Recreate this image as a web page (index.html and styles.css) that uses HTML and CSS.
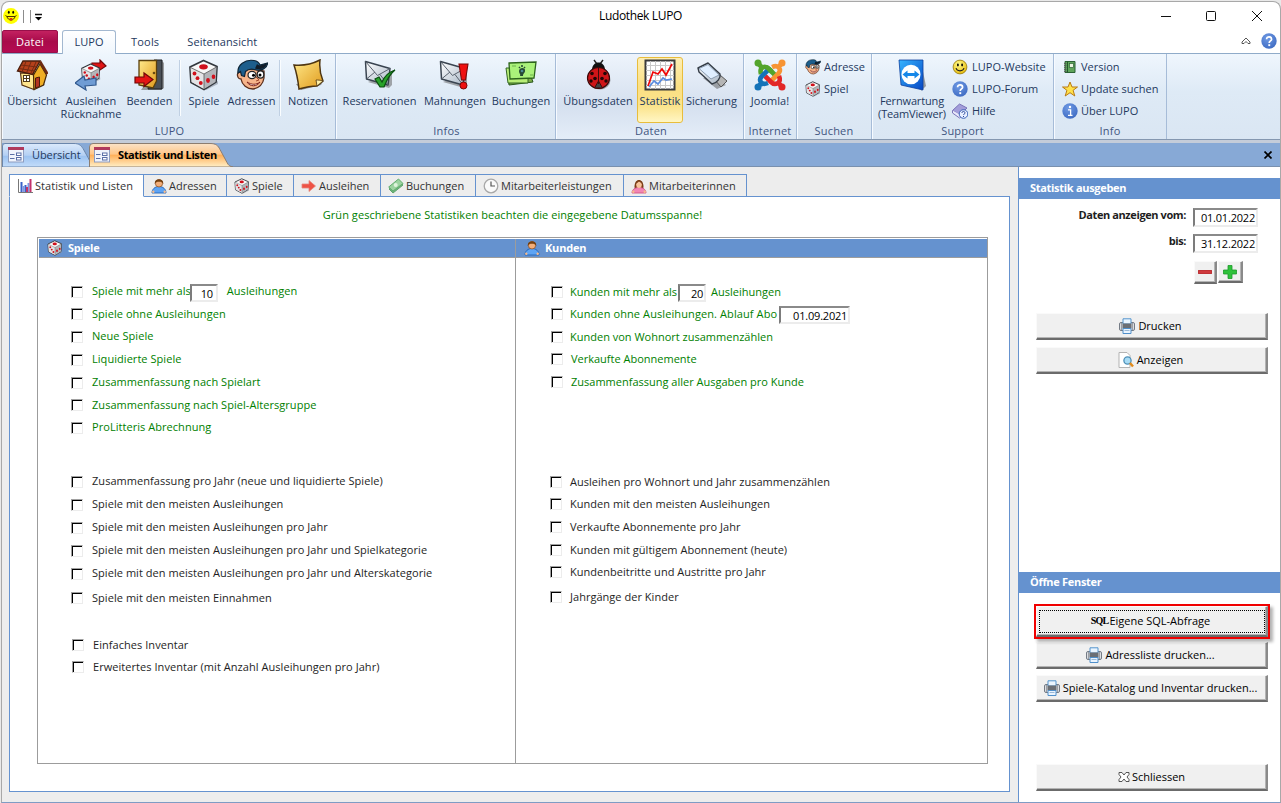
FILE: index.html
```html
<!DOCTYPE html>
<html lang="de">
<head>
<meta charset="utf-8">
<title>Ludothek LUPO</title>
<link rel="stylesheet" href="styles.css">
</head>
<body>
<svg class="defs" width="0" height="0" aria-hidden="true">
  <defs>
    <linearGradient id="gGold" x1="0" y1="0" x2="1" y2="1"><stop offset="0" stop-color="#ffe98a"/><stop offset="1" stop-color="#e09a1c"/></linearGradient>
    <linearGradient id="gSilver" x1="0" y1="0" x2="1" y2="1"><stop offset="0" stop-color="#ffffff"/><stop offset="1" stop-color="#a9b7c6"/></linearGradient>
    <linearGradient id="gBlue" x1="0" y1="0" x2="1" y2="1"><stop offset="0" stop-color="#36b4ff"/><stop offset="1" stop-color="#0647c4"/></linearGradient>
    <linearGradient id="gOrangeTab" x1="0" y1="0" x2="0" y2="1"><stop offset="0" stop-color="#fbe3c8"/><stop offset=".45" stop-color="#ffc688"/><stop offset=".5" stop-color="#ffb05a"/><stop offset="1" stop-color="#fff0c8"/></linearGradient>
    <linearGradient id="gBlueTab" x1="0" y1="0" x2="0" y2="1"><stop offset="0" stop-color="#dceafb"/><stop offset=".5" stop-color="#b4d0f4"/><stop offset=".55" stop-color="#9dc3f1"/><stop offset="1" stop-color="#c4ddfa"/></linearGradient>
    <radialGradient id="gRound" cx=".4" cy=".3" r=".8"><stop offset="0" stop-color="#6f9ae4"/><stop offset="1" stop-color="#3b68c0"/></radialGradient>
    <radialGradient id="gSmile" cx=".4" cy=".3" r=".8"><stop offset="0" stop-color="#fffb8a"/><stop offset="1" stop-color="#e3b400"/></radialGradient>
  </defs>
  <symbol id="dice" viewBox="0 0 32 32">
    <path d="M18 31l12-6v-3L18 29z" fill="#8a93a0" opacity=".6"/>
    <path d="M15.500 1.500L29 7.500 28 23 16 30.500 3 23.500 2 8z" fill="#f7f7f7" stroke="#33383e" stroke-width="1.800" stroke-linejoin="round"/>
    <path d="M2.500 8.500L16 15v15L3.500 23z" fill="#e4e4e6"/><path d="M16 15l12.500-7-1 15L16 30z" fill="#b3b5b9"/>
    <path d="M2.500 8.500L16 15l12.500-7M16 15v15" stroke="#555" stroke-width=".8" fill="none"/>
    <ellipse cx="15.500" cy="7.800" rx="4.300" ry="2.600" fill="#d0101c"/>
    <g fill="#d0101c"><circle cx="6.500" cy="14.500" r="1.900"/><circle cx="9.500" cy="19.200" r="1.900"/><circle cx="12.800" cy="24" r="1.900"/><ellipse cx="20" cy="21.500" rx="1.900" ry="2.400"/><ellipse cx="25.500" cy="17.800" rx="1.800" ry="2.300"/></g>
  </symbol>
  <symbol id="house" viewBox="0 0 32 32">
    <path d="M5 26l13 5 11-5-2-3z" fill="#777" opacity=".6"/>
    <path d="M4.500 14L6 26l12 4.500V15z" fill="#ffe58c" stroke="#5b3712" stroke-width="1.200"/>
    <path d="M17.500 16L24 5l6.500 11-3 10-9.500 4.500z" fill="#f0ae24" stroke="#4b2b08" stroke-width="1.200"/>
    <path d="M1.500 12L7 2h17l-7.500 13.500z" fill="#b5411b" stroke="#4a1e0c" stroke-width="1.400"/>
    <path d="M5 6l16 2M3 9.500l16 2.500M10 2.500L6 13M15 3l-4.500 11M20 3l-5 11" stroke="#742b12" stroke-width="1"/>
    <path d="M24 2.500L31.500 15" stroke="#6d2a11" stroke-width="2.600"/>
    <rect x="7.500" y="16.500" width="6" height="6" fill="#fff" stroke="#4f3a19"/><path d="M10.500 16.500v6M7.500 19.500h6" stroke="#4f3a19"/>
    <path d="M19.500 19l4-1v9.500l-4 1.500z" fill="#b33420" stroke="#4b1b0a"/>
  </symbol>
  <symbol id="face" viewBox="0 0 32 32">
    <path d="M4 13c-4 0-3 7 1 7 1 6 6 10 12 10 6-1 10-5 11-11V12L9 9z" fill="#f6b48a" stroke="#5a2d1a" stroke-width="1.300"/>
    <path d="M2 14C1 6 9 0 18 1.500c3 .5 5 2 6 4.500l7.500-2c0 5-6 8.500-13 6.500-4-1-7 0-9 2l-1 5-3-1-1-4z" fill="#1d5e8c" stroke="#0e2638" stroke-width="1.200"/>
    <path d="M21 5c1 1 3 1.500 3 1.500l7-2c-1 5-7 6.500-12 5z" fill="#111c28"/>
    <ellipse cx="16" cy="16" rx="4" ry="3.600" fill="#fff" stroke="#222" stroke-width="1.200"/><ellipse cx="24.500" cy="15.500" rx="3.300" ry="3.600" fill="#fff" stroke="#222" stroke-width="1.200"/>
    <circle cx="17.500" cy="16.300" r="1.500"/><circle cx="24" cy="16" r="1.500"/>
    <path d="M20 18l3 3-3 1" stroke="#a44b30" fill="none"/><path d="M11 23c5 3 9 3 13 0-3 5-10 5-13 0z" fill="#fff" stroke="#7c2018" stroke-width="1"/>
  </symbol>
  <symbol id="person" viewBox="0 0 16 16">
    <path d="M1 15C1 11 4 8.500 8 8.500s7 2.500 7 6.500z" fill="#5ea4f4" stroke="#2264b8" stroke-width=".9"/><circle cx="2.300" cy="13.800" r="1.200" fill="#f7b98a"/><circle cx="13.700" cy="13.800" r="1.200" fill="#f7b98a"/>
    <circle cx="8" cy="5.300" r="3.700" fill="#f3ae79" stroke="#8a4a1c" stroke-width=".7"/><path d="M3.900 6C2.500-.3 13.500-.3 12.100 6c-1-2-1.800-2.300-4.100-2.300S4.900 4 3.900 6z" fill="#75400f"/>
  </symbol>
  <symbol id="woman" viewBox="0 0 16 16">
    <path d="M3.700 10.500C2-1 14-1 12.300 10.500z" fill="#7b3e18"/>
    <path d="M1 15c0-3.500 3-5.500 7-5.500s7 2 7 5.500z" fill="#f286b4" stroke="#d05287" stroke-width=".9"/><circle cx="2.300" cy="13.800" r="1.200" fill="#f7b98a"/><circle cx="13.700" cy="13.800" r="1.200" fill="#f7b98a"/>
    <ellipse cx="8" cy="6.400" rx="2.800" ry="3.500" fill="#f8c49c"/><path d="M4.800 6c0-3 1.800-3.500 3.200-3.500S11.200 3 11.200 6C10 5 9 4 8 3.600 7 4.500 6 5.300 4.800 6z" fill="#7b3e18"/>
  </symbol>
  <symbol id="form" viewBox="0 0 16 16">
    <rect x=".5" y="1" width="15" height="14" fill="#f0f4fc" stroke="#8e9dc0"/><rect x="0" y="0" width="16" height="3" fill="#b03a5c"/>
    <path d="M2 7.500h4.500M2 11.500h4.500" stroke="#5b6fa6"/><rect x="8.500" y="6" width="4.500" height="2.500" fill="#fff" stroke="#5b6fa6"/><rect x="8.500" y="10.500" width="4.500" height="2.500" fill="#fff" stroke="#5b6fa6"/>
  </symbol>
  <symbol id="mail" viewBox="0 0 32 32">
    <path d="M4 23l21 6 3-3V12z" fill="#666" opacity=".55"/>
    <path d="M1.500 2.500L26 9.500 24 26 2.500 20z" fill="url(#gSilver)" stroke="#3a4450" stroke-width="1.500" stroke-linejoin="round"/>
    <path d="M1.500 2.500l12 14L26 9.500M2.500 20l8.500-7M24 26l-8-10.500" fill="none" stroke="#59626e" stroke-width="1"/>
  </symbol>
  <symbol id="printer" viewBox="0 0 16 16">
    <rect x=".5" y="4.500" width="15" height="8" rx="1.500" fill="#dcdee1" stroke="#747b85"/><path d="M4 6V.8h8V6z" fill="#eaf5ff" stroke="#5594cc"/>
    <path d="M2.500 5v7M13.500 5v7" stroke="#9a9fa7"/><rect x="3.500" y="5.500" width="9" height="5" fill="#6b6f75"/><path d="M4 10.500h8v5H4z" fill="#e9f4ff" stroke="#4f8fca"/><path d="M5.500 12.500h5" stroke="#9ab9d8"/>
  </symbol>
  <symbol id="help" viewBox="0 0 16 16"><circle cx="8" cy="8" r="7.700" fill="url(#gRound)"/><path d="M5.600 6.200c0-3.200 5-3 5 0 0 1.700-2.400 1.800-2.400 3.800" fill="none" stroke="#fff" stroke-width="1.700"/><rect x="7.300" y="11.200" width="1.900" height="1.900" fill="#fff"/></symbol>
  <symbol id="smile" viewBox="0 0 16 16"><circle cx="8" cy="8" r="6.900" fill="url(#gSmile)" stroke="#94780c" stroke-width=".8"/><ellipse cx="5.900" cy="6" rx=".9" ry="1.400"/><ellipse cx="10.100" cy="6" rx=".9" ry="1.400"/><path d="M4 9.200c1 3.500 7 3.500 8 0" fill="none" stroke="#222" stroke-width="1.100"/></symbol>
</svg>

<div class="window">
  <header class="titlebar">
    <svg class="appicon" width="16" height="16" viewBox="0 0 16 16"><circle cx="8" cy="8" r="7.900" fill="#ffff00"/><ellipse cx="5.800" cy="4.300" rx=".9" ry="1.500"/><ellipse cx="10.200" cy="4.300" rx=".9" ry="1.500"/><path d="M2.500 7.500l1.300.8c1.500 5 6.900 5 8.400 0l1.300-.8M4 8.500h8" stroke="#4c3000" fill="none" stroke-width="1"/><path d="M6.500 10h3L9 12.500H7z" fill="#e03010"/></svg>
    <svg class="quick" width="22" height="14" viewBox="0 0 22 14"><path d="M2.500 0v13M9.500 0v13" stroke="#8c8c8c"/><path d="M14 4.500h7" stroke="#111" stroke-width="1.500"/><path d="M14 7h7l-3.500 3.500z"/></svg>
    <h1>Ludothek LUPO</h1>
    <svg class="wincontrols" width="104" height="12" viewBox="0 0 104 12" fill="none" stroke="#111"><path d="M0 6.500h10"/><rect x="45.500" y="1.500" width="9" height="9" rx="1"/><path d="M91 1l10 10M101 1L91 11"/></svg>
  </header>

  <nav class="menu">
    <span class="file">Datei</span><span class="mtab on">LUPO</span><span class="mtab tools-tab">Tools</span><span class="mtab preview">Seitenansicht</span>
    <svg class="collapse" width="10" height="8" viewBox="0 0 10 8"><path d="M1 5l4-4 4 4v1.500H7L5 4.500l-2 2H1z" fill="#fff" stroke="#444" stroke-width=".9"/></svg>
    <svg width="16" height="16"><use href="#help"/></svg>
  </nav>

  <section class="ribbon">
    <div class="group g-lupo">
      <div class="tools">
        <div class="tool w56"><svg width="32" height="32"><use href="#house"/></svg><span>Übersicht</span></div>
        <div class="tool w62"><svg width="32" height="32" viewBox="0 0 32 32"><path d="M17 4h8V1l6 6-9 6-2-3h-4z" fill="#e01414" stroke="#730808" stroke-width="1.200"/><svg x="5" y="4" width="22" height="21" viewBox="0 0 32 32"><use href="#dice"/></svg><path d="M0 24l9-7 1 4 11-2v7l-11 1 1 4z" fill="#6f9cd4" stroke="#31598e" stroke-width="1.200"/></svg><span>Ausleihen<br>Rücknahme</span></div>
        <div class="tool w55"><svg width="32" height="32" viewBox="0 0 32 32"><path d="M28 2l2 2v25l-3 2H7" fill="#777" opacity=".7"/><path d="M20 1h8v29H14z" fill="#4a5057" stroke="#1c1f22"/><path d="M5 1.500h17.500V22L19 29 5 26z" fill="url(#gGold)" stroke="#5a3f0b" stroke-width="1.300"/><circle cx="20" cy="14" r="1.300" fill="#6a4a10"/><path d="M1 18h9v-4l9 6.500-9 7V24H1z" fill="#e41414" stroke="#6f0707" stroke-width="1.200"/></svg><span>Beenden</span></div>
        <i class="sep"></i>
        <div class="tool w42"><svg width="32" height="32"><use href="#dice"/></svg><span>Spiele</span></div>
        <div class="tool w53"><svg width="32" height="32"><use href="#face"/></svg><span>Adressen</span></div>
        <i class="sep"></i>
        <div class="tool w52"><svg width="32" height="32" viewBox="0 0 32 32"><path d="M4 25l5 6 20-5 2-4z" fill="#555" opacity=".6"/><path d="M2 6c9 1 18-1 26-5-1 9 0 14 3 21l-6 5c-7 0-11 1-18 3C6 21 5 15 2 6z" fill="url(#gGold)" stroke="#4e3510" stroke-width="1.500"/><path d="M31 22c-3-1-5-1-7-1l1 6z" fill="#fff0a8" stroke="#4e3510" stroke-width=".8"/></svg><span>Notizen</span></div>
      </div>
      <div class="caption">LUPO</div>
    </div>
    <div class="group g-infos">
      <div class="tools">
        <div class="tool w83"><svg width="32" height="32" viewBox="0 0 32 32"><use href="#mail" width="32" height="32"/><path d="M11 20l4-2 3 5c3-7 7-10 13-12-5 4-8 9-11 17h-4z" fill="#28a32a" stroke="#0b4f10" stroke-width="1.200"/></svg><span>Reservationen</span></div>
        <div class="tool w66"><svg width="32" height="32" viewBox="0 0 32 32"><use href="#mail" width="32" height="32"/><path d="M20 5h9l-2.500 16h-4z" fill="#ee1010" stroke="#7a0707" stroke-width="1.100"/><circle cx="24.500" cy="26.500" r="3.500" fill="#ee1010" stroke="#7a0707"/></svg><span>Mahnungen</span></div>
        <div class="tool w65"><svg width="32" height="32" viewBox="0 0 32 32"><path d="M3 12l21 0 4 11-24 3z" fill="#7fae4a" stroke="#27561a"/><path d="M1 9h22v15H3z" fill="#b8ee78" stroke="#316620"/><path d="M4 4l27-1-2 16-24 1z" fill="#aaf27a" stroke="#2c631c" stroke-width="1.300"/><path d="M7 7h4M25 16h3" stroke="#6cb04d"/><path d="M14 12c0-4 7-4 6 0 0 2-2 2-2 5h-3c1-2-1-2-1-5z" fill="#264b35"/><path d="M14 8l1 1M17 6v2M20 8l-1 1" stroke="#264b35" stroke-width="1.600"/><circle cx="17" cy="12" r="1.300" fill="#4d8b97"/></svg><span>Buchungen</span></div>
      </div>
      <div class="caption">Infos</div>
    </div>
    <div class="group g-daten">
      <div class="tools">
        <div class="tool w78"><svg width="32" height="32" viewBox="0 0 32 32"><ellipse cx="18" cy="21" rx="10.500" ry="9.500" fill="#555" opacity=".5"/><path d="M12 1l3 4M21 1l-3 4" stroke="#222" stroke-width="1.400"/><path d="M10 11c0-10 13-10 13 0z" fill="#111"/><ellipse cx="16.500" cy="19" rx="11" ry="10.500" fill="#cf1518" stroke="#3b0909" stroke-width="1.200"/><path d="M16.500 9v16M12.500 29l4-7 4 7z" fill="#444" stroke="#400b0b"/><g fill="#210606"><circle cx="10" cy="14.500" r="1.800"/><circle cx="13" cy="19.500" r="1.800"/><circle cx="9" cy="22" r="1.700"/><circle cx="23" cy="14.500" r="1.800"/><circle cx="20" cy="19.500" r="1.800"/><circle cx="24" cy="22" r="1.700"/></g></svg><span>Übungsdaten</span></div>
        <div class="tool w46 active"><svg width="32" height="32" viewBox="0 0 32 32"><rect x="1.500" y="1.500" width="29" height="29" fill="#fff" stroke="#3b3b3b" stroke-width="2"/><path d="M6.500 2v28M11.500 2v28M16.500 2v28M21.500 2v28M26.500 2v28M2 6.500h28M2 11.500h28M2 16.500h28M2 21.500h28M2 26.500h28" stroke="#c9c9c9"/><path d="M4 27l5-14 5 2 4-5 4 6 6-11" stroke="#f00808" fill="none" stroke-width="1.700"/><path d="M5 28l5-6 4 3 5-6 3 2 6-1" stroke="#5b8de0" fill="none" stroke-width="1.700"/></svg><span>Statistik</span></div>
        <div class="tool w57"><svg width="32" height="32" viewBox="0 0 32 32"><path d="M7 19l14 11 9-4-12-8z" fill="#555" opacity=".5"/><path d="M19 21l5-5 7 6-6 6z" fill="#b5b5b5" stroke="#555"/><path d="M2 9L12 4l12 11c1 4-3 9-8 10L3 13z" fill="url(#gSilver)" stroke="#353d47" stroke-width="1.400" stroke-linejoin="round"/><path d="M3 9.500L12 5.500l11 10.500-8 4z" fill="#dfeeff" stroke="#8193a8" stroke-width=".9"/></svg><span>Sicherung</span></div>
      </div>
      <div class="caption">Daten</div>
    </div>
    <div class="group g-internet">
      <div class="tools"><div class="tool w52"><svg width="34" height="32" viewBox="0 0 34 32" fill="none"><g stroke-width="4.600"><path d="M5 4l5 6M8 15C6 8 12 6 16 10l7 7" stroke="#53a52c"/><path d="M29 4l-5 6M19 8c7-3 10 3 6 7l-8 8" stroke="#f79433"/><path d="M29 28l-5-6M26 17c3 7-4 10-8 6l-6-6" stroke="#e22728"/><path d="M5 28l5-6M15 24c-7 3-10-3-6-7l8-8" stroke="#1473b8"/><path d="M12 8.500c1-.5 3 .5 4 1.500l3 3" stroke="#53a52c"/></g><circle cx="5" cy="4" r="3.500" fill="#53a52c"/><circle cx="29" cy="4" r="3.500" fill="#f79433"/><circle cx="29" cy="28" r="3.500" fill="#e22728"/><circle cx="5" cy="28" r="3.500" fill="#1473b8"/></svg><span>Joomla!</span></div></div>
      <div class="caption">Internet</div>
    </div>
    <div class="group g-suchen">
      <div class="links"><div><svg width="16" height="16"><use href="#face"/></svg><span>Adresse</span></div><div><svg width="16" height="16"><use href="#dice"/></svg><span>Spiel</span></div></div>
      <div class="caption">Suchen</div>
    </div>
    <div class="group g-support">
      <div class="tools">
        <div class="tool w82"><svg width="32" height="32" viewBox="0 0 32 32"><path d="M25 3l5 24-5 5z" fill="#555" opacity=".55"/><path d="M3 1h24v30L5 26z" fill="url(#gBlue)" stroke="#0c3fa0" stroke-width=".8"/><ellipse cx="15" cy="15.500" rx="9.500" ry="9.800" fill="#fff"/><path d="M6.500 15.500l5-4v2.500h7v-2.500l5 4-5 4V17h-7v2.500z" fill="#1687e8"/></svg><span class="tv">Fernwartung<br>(TeamViewer)</span></div>
        <div class="links">
          <div><svg width="16" height="16"><use href="#smile"/></svg><span>LUPO-Website</span></div>
          <div><svg width="16" height="16"><use href="#help"/></svg><span>LUPO-Forum</span></div>
          <div><svg width="16" height="16" viewBox="0 0 16 16"><path d="M.5 7.500l7-6.500 7.500 4-7 7z" fill="#a29dda" stroke="#7a74b8"/><path d="M.5 7.500v2.500l7 5 3-2" fill="#e8e8fa" stroke="#7a74b8"/><circle cx="11.500" cy="11" r="4.300" fill="#e8efff" stroke="#3c64b8"/><path d="M10 10c0-2.300 3-2 3 0 0 1-1.500 1-1.500 2M11.500 13v1" stroke="#27479a" fill="none"/></svg><span>Hilfe</span></div>
        </div>
      </div>
      <div class="caption">Support</div>
    </div>
    <div class="group g-info">
      <div class="links">
        <div><svg width="16" height="16" viewBox="0 0 16 16"><path d="M3 2.500h10v11H3z" fill="#5fa55b" stroke="#2b6135"/><rect x="7.500" y="4.500" width="4" height="4" fill="#e8f5de" stroke="#2b6135" stroke-width=".7"/><path d="M5.500 2.500v11" stroke="#245a2d"/><path d="M2 4.500h2.500M2 6.500h2.500M2 8.500h2.500M2 10.500h2.500M2 12.500h2.500" stroke="#555" stroke-width=".8"/></svg><span>Version</span></div>
        <div><svg width="16" height="16" viewBox="0 0 16 16"><path d="M8 1l2 5h5.500l-4.400 3.300L12.800 15 8 11.700 3.200 15l1.700-5.700L.5 6H6z" fill="#ffe14a" stroke="#b87a14" stroke-linejoin="round"/></svg><span>Update suchen</span></div>
        <div><svg width="16" height="16" viewBox="0 0 16 16"><circle cx="8" cy="8" r="7.700" fill="url(#gRound)"/><circle cx="8" cy="4" r="1.200" fill="#fff"/><path d="M6 6.800h2.600v5.500M6 12.300h4.500" stroke="#fff" fill="none" stroke-width="1.300"/></svg><span>Über LUPO</span></div>
      </div>
      <div class="caption">Info</div>
    </div>
  </section>

  <div class="docbar">
    <div class="doctab first"><svg class="shape" width="88" height="24" viewBox="0 0 88 24"><path d="M.5 24V3Q.5.500 3 .500H72c5 0 7 2 9 5l5 9 1.500 3V24z" fill="url(#gBlueTab)" stroke="#6b86ab"/></svg><svg width="16" height="16"><use href="#form"/></svg><span>Übersicht</span></div>
    <div class="doctab second"><svg class="shape" width="144" height="24" viewBox="0 0 144 24"><path d="M.5 24V4Q.5.500 4 .500H121c6 0 8 2 10 6l7 13c1.500 3 3 4 6 4.500z" fill="url(#gOrangeTab)" stroke="#8c7d70"/></svg><svg width="16" height="16"><use href="#form"/></svg><span>Statistik und Listen</span></div>
    <svg class="docclose" width="8" height="8" viewBox="0 0 8 8"><path d="M.5.5l7 7M7.500.5l-7 7" stroke="#000" stroke-width="1.700"/></svg>
  </div>

  <main class="body">
    <section class="left">
      <nav class="tabs">
        <span class="tab t1 on"><svg width="16" height="16" viewBox="0 0 16 16"><path d="M1.500 1v13.500H16" stroke="#777" fill="none"/><path d="M4.500 4v10M8.500 7v7" stroke="#3a62c8" stroke-width="2"/><path d="M6.500 8v6M11.500 5v9" stroke="#7f97e2" stroke-width="2"/><path d="M10 9v5M13.500 1v13" stroke="#c2336a" stroke-width="2"/></svg>Statistik und Listen</span>
        <span class="tab t2"><svg width="16" height="16"><use href="#person"/></svg>Adressen</span>
        <span class="tab t3"><svg width="16" height="16"><use href="#dice"/></svg>Spiele</span>
        <span class="tab t4"><svg width="16" height="16" viewBox="0 0 16 16"><path d="M1 6h7V2.500l6.500 5.500L8 13.500V10H1z" fill="#ee5346" stroke="#e6877b" stroke-width=".8"/></svg>Ausleihen</span>
        <span class="tab t5"><svg width="16" height="16" viewBox="0 0 16 16"><path d="M1 11L11 3l4 4L5 15z" fill="#6fb47c" stroke="#5fa56c"/><path d="M.7 9L10.500 1l4.500 4.500L5 13z" fill="#9cd3a0" stroke="#62ad6f"/><circle cx="7.700" cy="7" r="2" fill="#dff3dd"/></svg>Buchungen</span>
        <span class="tab t6"><svg width="16" height="16" viewBox="0 0 16 16"><circle cx="8" cy="8" r="6.800" fill="#fafafa" stroke="#a8a8a8" stroke-width="1.300"/><path d="M8 3.500V8h4" stroke="#555" fill="none" stroke-width="1.200"/></svg>Mitarbeiterleistungen</span>
        <span class="tab t7"><svg width="16" height="16"><use href="#woman"/></svg>Mitarbeiterinnen</span>
        <span class="rest"></span>
      </nav>
      <div class="sheet">
        <p class="note">Grün geschriebene Statistiken beachten die eingegebene Datumsspanne!</p>
        <div class="frame">
          <div class="col spiele">
            <h2><svg width="16" height="16"><use href="#dice"/></svg>Spiele</h2>
            <div class="rows">
              <label class="green top"><i></i><span>Spiele mit mehr als</span><b class="field n10">10</b><span>Ausleihungen</span></label>
              <label class="green"><i></i><span>Spiele ohne Ausleihungen</span></label>
              <label class="green"><i></i><span>Neue Spiele</span></label>
              <label class="green"><i></i><span>Liquidierte Spiele</span></label>
              <label class="green"><i></i><span>Zusammenfassung nach Spielart</span></label>
              <label class="green"><i></i><span>Zusammenfassung nach Spiel-Altersgruppe</span></label>
              <label class="green"><i></i><span>ProLitteris Abrechnung</span></label>
              <div></div>
              <label><i></i><span>Zusammenfassung pro Jahr (neue und liquidierte Spiele)</span></label>
              <label><i></i><span>Spiele mit den meisten Ausleihungen</span></label>
              <label><i></i><span>Spiele mit den meisten Ausleihungen pro Jahr</span></label>
              <label><i></i><span>Spiele mit den meisten Ausleihungen pro Jahr und Spielkategorie</span></label>
              <label><i></i><span>Spiele mit den meisten Ausleihungen pro Jahr und Alterskategorie</span></label>
              <label><i></i><span>Spiele mit den meisten Einnahmen</span></label>
              <div></div>
              <label class="in"><i></i><span>Einfaches Inventar</span></label>
              <label class="in"><i></i><span>Erweitertes Inventar (mit Anzahl Ausleihungen pro Jahr)</span></label>
            </div>
          </div>
          <div class="col kunden">
            <h2><svg width="16" height="16"><use href="#person"/></svg>Kunden</h2>
            <div class="rows">
              <label class="green top"><i></i><span>Kunden mit mehr als</span><b class="field n20">20</b><span>Ausleihungen</span></label>
              <label class="green"><i></i><span class="abo">Kunden ohne Ausleihungen. Ablauf Abo</span><b class="field date">01.09.2021</b></label>
              <label class="green"><i></i><span>Kunden von Wohnort zusammenzählen</span></label>
              <label class="green wide"><i></i><span>Verkaufte Abonnemente</span></label>
              <label class="green wide"><i></i><span>Zusammenfassung aller Ausgaben pro Kunde</span></label>
              <div></div>
              <label class="low"><i></i><span>Ausleihen pro Wohnort und Jahr zusammenzählen</span></label>
              <label class="low"><i></i><span>Kunden mit den meisten Ausleihungen</span></label>
              <label class="low"><i></i><span>Verkaufte Abonnemente pro Jahr</span></label>
              <label class="low"><i></i><span>Kunden mit gültigem Abonnement (heute)</span></label>
              <label class="low"><i></i><span>Kundenbeitritte und Austritte pro Jahr</span></label>
              <label class="low"><i></i><span>Jahrgänge der Kinder</span></label>
            </div>
          </div>
        </div>
      </div>
    </section>

    <aside class="side">
      <h3>Statistik ausgeben</h3>
      <div class="dates">
        <div class="daterow"><strong>Daten anzeigen vom:</strong><b class="field">01.01.2022</b></div>
        <div class="daterow"><strong>bis:</strong><b class="field">31.12.2022</b></div>
        <div class="pm">
          <span class="btn minus"><svg width="14" height="4"><rect width="14" height="4" rx="1" fill="#cf3a3e" stroke="#a3262a" stroke-width=".7"/></svg></span>
          <span class="btn plus"><svg width="14" height="14" viewBox="0 0 14 14"><path d="M5 .5h4V5h4.500v4H9v4.500H5V9H.5V5H5z" fill="#2fc23b" stroke="#1d9a2b" stroke-width=".8"/></svg></span>
        </div>
      </div>
      <div class="btn wide"><svg width="16" height="16"><use href="#printer"/></svg>Drucken</div>
      <div class="btn wide second"><svg width="16" height="16" viewBox="0 0 16 16"><path d="M1 .5h8l3 3v12H1z" fill="#fff" stroke="#b3b3b3"/><circle cx="9.500" cy="8.500" r="3.600" fill="#a9dcf5" stroke="#4c8fb8" stroke-width="1.300"/><path d="M12 11l3 3.500" stroke="#e08a1c" stroke-width="2.400"/></svg>Anzeigen</div>
      <h3 class="windows">Öffne Fenster</h3>
      <div class="highlight"><div class="btn wide sql"><span class="focus"></span><em>SQL</em>Eigene SQL-Abfrage</div></div>
      <div class="btn wide list"><svg width="16" height="16"><use href="#printer"/></svg>Adressliste drucken...</div>
      <div class="btn wide catalog"><svg width="16" height="16"><use href="#printer"/></svg>Spiele-Katalog und Inventar drucken...</div>
      <div class="btn wide close"><svg width="12" height="10" viewBox="0 0 12 10"><path d="M1 .5h3l2 2.500L8 .5h3v2L9 5l2 2.500v2H8L6 7 4 9.500H1v-2L3 5 1 2.500z" fill="#fff" stroke="#444" stroke-width=".9"/></svg>Schliessen</div>
    </aside>
  </main>
</div>
</body>
</html>
```

FILE: styles.css
```css
* { box-sizing: border-box; }
body { margin: 0; width: 1281px; height: 803px; overflow: hidden; background: #e9e9e9; font: 11px/14px "Open Sans", "Noto Sans", sans-serif; color: #1e1e1e; padding: 1px 0 0 1px; }
.defs { display: block; position: absolute; }
svg { flex: none; display: block; }
i, em { font-style: normal; }
.window { width: 1280px; height: 802px; border: 1px solid #a8a8a8; border-bottom-color: #7f9cc4; border-radius: 8px 8px 0 0; background: #fff; overflow: hidden; display: flex; flex-direction: column; white-space: nowrap; }

.titlebar { height: 28px; flex: none; display: flex; align-items: center; }
.appicon { margin-left: 1px; }
.quick { margin: 2px 0 0 2px; }
h1 { font-size: 12px; line-height: 16px; font-weight: 400; color: #000; margin: 0 auto 0 556px; letter-spacing: -.35px; }
.wincontrols { margin-right: 15px; }

.menu { height: 23px; flex: none; display: flex; align-items: flex-end; color: #24395e; }
.file { width: 56px; height: 23px; background: linear-gradient(#c32160, #a80b4a 50%, #b50b52); border: 1px solid #98104a; border-radius: 2px 2px 0 0; color: #fff; text-align: center; line-height: 22px; letter-spacing: .2px; }
.mtab { line-height: 24px; height: 23px; }
.mtab.on { width: 54px; height: 24px; margin: 0 0 -1px 4px; text-align: center; border: 1px solid #a3b8d0; border-bottom: 0; border-radius: 3px 3px 0 0; background: linear-gradient(#fff, #eff6fd); position: relative; line-height: 22px; }
.mtab.tools-tab { margin-left: 15px; letter-spacing: .2px; }
.mtab.preview { margin-left: 28px; letter-spacing: .1px; }
.collapse { margin: 0 10px 8px auto; }
.menu > svg:last-child { margin: 0 3px 4px 0; }

.ribbon { height: 87px; flex: none; display: flex; border-top: 1px solid #8fabc9; border-bottom: 1px solid #8497b0; background: linear-gradient(#eff6fd, #deeaf6 45%, #dae6f3); color: #24395e; }
.group { display: flex; flex-direction: column; justify-content: space-between; border-right: 1px solid #a6bcd8; box-shadow: inset 1px 0 #f6faff; padding: 3px 0 0 3px; }
.g-lupo { width: 334px; padding-left: 2px; }
.g-infos { width: 220px; padding-left: 2px; }
.g-daten { width: 188px; background: linear-gradient(#eef4fc, #d5e0ef 60%, #e4edf8); padding-left: 3px; }
.g-internet { width: 53px; padding-left: 0; }
.g-suchen { width: 75px; padding-left: 8px; }
.g-support { width: 182px; padding-left: 0; }
.g-info { width: 113px; padding-left: 8px; }
.caption { text-align: center; line-height: 16px; color: #3f5580; letter-spacing: .2px; }
.g-suchen .caption, .g-info .caption { margin-left: -8px; }
.tools { display: flex; }
.tool { height: 66px; display: flex; flex-direction: column; align-items: center; text-align: center; line-height: 13px; padding-top: 2px; }
.tool span { margin-top: 3px; letter-spacing: .03px; }
.tool .tv { letter-spacing: -.15px; }
.tool.active { border: 1px solid #e8bd3c; border-radius: 3px; background: linear-gradient(#fdeeb4, #fbdf83 45%, #fbe38b 75%, #fff6c4); padding-top: 1px; }
.w42 { width: 44px; } .w46 { width: 46px; } .w52 { width: 52px; } .w53 { width: 51px; } .w55 { width: 55px; } .w56 { width: 56px; } .w57 { width: 57px; } .w62 { width: 62px; } .w65 { width: 64px; } .w66 { width: 68px; } .w78 { width: 78px; } .w82 { width: 80px; } .w83 { width: 83px; }
.sep { width: 2px; height: 56px; margin: 3px 1px 0 2px; background: #c0d0e3; border-right: 1px solid #fafdff; }
.links { margin-top: -1px; }
.links > div { display: flex; align-items: center; height: 22px; gap: 3px; }
.tools .links > div { gap: 4px; }

.docbar { height: 27px; flex: none; border-top: 3px solid #c4ccd9; border-bottom: 1px solid #7990ae; background: #87a9d6; display: flex; align-items: center; }
.doctab { position: relative; height: 24px; display: flex; align-items: center; }
.doctab .shape { position: absolute; left: 0; top: 0; }
.doctab svg:not(.shape), .doctab span { position: relative; }
.doctab.first { width: 87px; padding-left: 6px; gap: 8px; color: #24395e; letter-spacing: -.1px; }
.doctab.second { width: 144px; padding-left: 5px; gap: 8px; color: #000; font-weight: 700; letter-spacing: -.4px; }
.docclose { margin: 0 8px 0 auto; }

.body { flex: 1; display: flex; min-height: 0; }
.left { width: 1016px; background: #ededed; padding: 7px 8px 10px 7px; display: flex; flex-direction: column; }
.tabs { display: flex; height: 23px; flex: none; color: #333; }
.tab { border: 1px solid #6592cf; border-left: 0; display: flex; align-items: center; gap: 2px; padding-left: 7px; }
.tab.on { background: #fff; border-left: 1px solid #6592cf; border-bottom-color: #fff; letter-spacing: .05px; padding-left: 7px; }
.t1 { width: 135px; } .t2 { width: 83px; } .t3 { width: 67px; } .t4 { width: 87px; } .t5 { width: 95px; } .t6 { width: 148px; } .t7 { width: 123px; }
.rest { flex: 1; border-bottom: 1px solid #6592cf; }
.sheet { flex: 1; background: #fff; border: 1px solid #6592cf; border-top: 0; padding: 11px 21px 27px 27px; display: flex; flex-direction: column; }
.note { margin: 0; text-align: center; color: #008000; height: 29px; letter-spacing: .06px; }
.frame { flex: 1; border: 1px solid #9c9c9c; display: grid; grid-template-columns: 477px 1fr; padding-top: 1px; }
.kunden { border-left: 1px solid #9c9c9c; }
h2 { margin: 0 0 0 1px; height: 19px; background: #6592cf; border-bottom: 1px solid #9c9c9c; color: #fff; font-size: 11px; display: flex; align-items: center; gap: 5px; padding-left: 8px; letter-spacing: -.2px; }
.kunden h2 { margin: 0; }
.rows { padding: 22px 0 0 33px; display: grid; letter-spacing: .05px; grid-template-rows: 23px 22px 23px 23px 23px 22px 23px 31px 23px 23px 23px 23px 23px 26px 23px 22px 22px; }
.kunden .rows { padding-left: 35px; grid-template-rows: 23px 22px 23px 22px 23px 78px 21px 23px 23px 23px 22px 27px; }
label { display: flex; align-items: center; }
.spiele label > span { margin-top: -1px; }
.kunden label > span { letter-spacing: 0; }
.kunden .low > span { letter-spacing: .03px; }
label i { width: 12px; height: 12px; flex: none; margin-right: 9px; background: #fff; border: 1px solid; border-color: #a0a0a0 #ececec #ececec #a0a0a0; box-shadow: inset 1px 1px #000; }
.kunden label i { margin-right: 7px; }
.kunden label.wide i { margin-right: 8px; }
.kunden label.low { margin-left: -1px; }
.kunden label.low i { margin-right: 8px; }
label.in { padding-left: 1px; }
.green { color: #008000; }
.kunden label > .abo { letter-spacing: .1px; }
.field { display: block; height: 18px; background: #fff; border: 2px solid; border-color: #8a8a8a #ececec #ececec #7c7c7c; color: #000; font-weight: 400; text-align: right; line-height: 16px; padding-right: 1px; flex: none; letter-spacing: -.2px; }
.n10 { width: 28px; margin: 3px 9px 0 -1px; padding-right: 3px; }
.n20 { width: 28px; margin: 2px 5px 0 1px; }
.field.date { width: 71px; margin: 2px 0 0 2px; }

.side { width: 262px; border-left: 1px solid #6592cf; background: #fff; padding-top: 11px; display: flex; flex-direction: column; }
h3 { margin: 0; height: 21px; flex: none; background: #6592cf; color: #fff; font-size: 11px; line-height: 20px; padding-left: 11px; letter-spacing: -.3px; }
.dates { padding: 9px 22px 0 0; height: 114px; flex: none; }
.daterow { display: flex; justify-content: flex-end; height: 26px; }
.daterow strong { margin: 0 7px 0 0; letter-spacing: -.4px; }
.daterow .field { width: 65px; height: 19px; }
.pm { display: flex; gap: 1px; padding-left: 175px; margin-top: 1px; }
.btn { background: #f0f0f0; border: solid; border-width: 1px 2px 2px 1px; border-color: #fafafa #8a8a8a #6b6b6b #fafafa; box-shadow: inset -1px -1px #b4b4b4; display: flex; align-items: center; justify-content: center; color: #000; flex: none; }
.minus { width: 23px; height: 23px; } .plus { width: 25px; height: 22px; }
.btn.wide { width: 232px; height: 27px; margin-left: 17px; gap: 3px; padding-right: 2px; }
.btn.second { margin-top: 7px; }
.windows { margin-top: 198px; }
.highlight { margin: 11px 0 0 15px; width: 236px; height: 35px; flex: none; border: 2px solid #f00000; box-shadow: 3px 3px 3px rgba(0,0,0,.3); position: relative; z-index: 1; }
.btn.sql { position: relative; width: 232px; height: 31px; margin: 0; gap: 0; }
.focus { position: absolute; inset: 3px 1px 2px 2px; border: 1px dotted #000; }
.sql em { font: 700 10px/12px "Liberation Serif", serif; letter-spacing: -.8px; margin-right: 1px; }
.list { margin-top: 3px; }
.catalog { margin-top: 6px; }
.close { margin-top: 62px; }
.btn.close { gap: 2px; padding-right: 0; }
```
